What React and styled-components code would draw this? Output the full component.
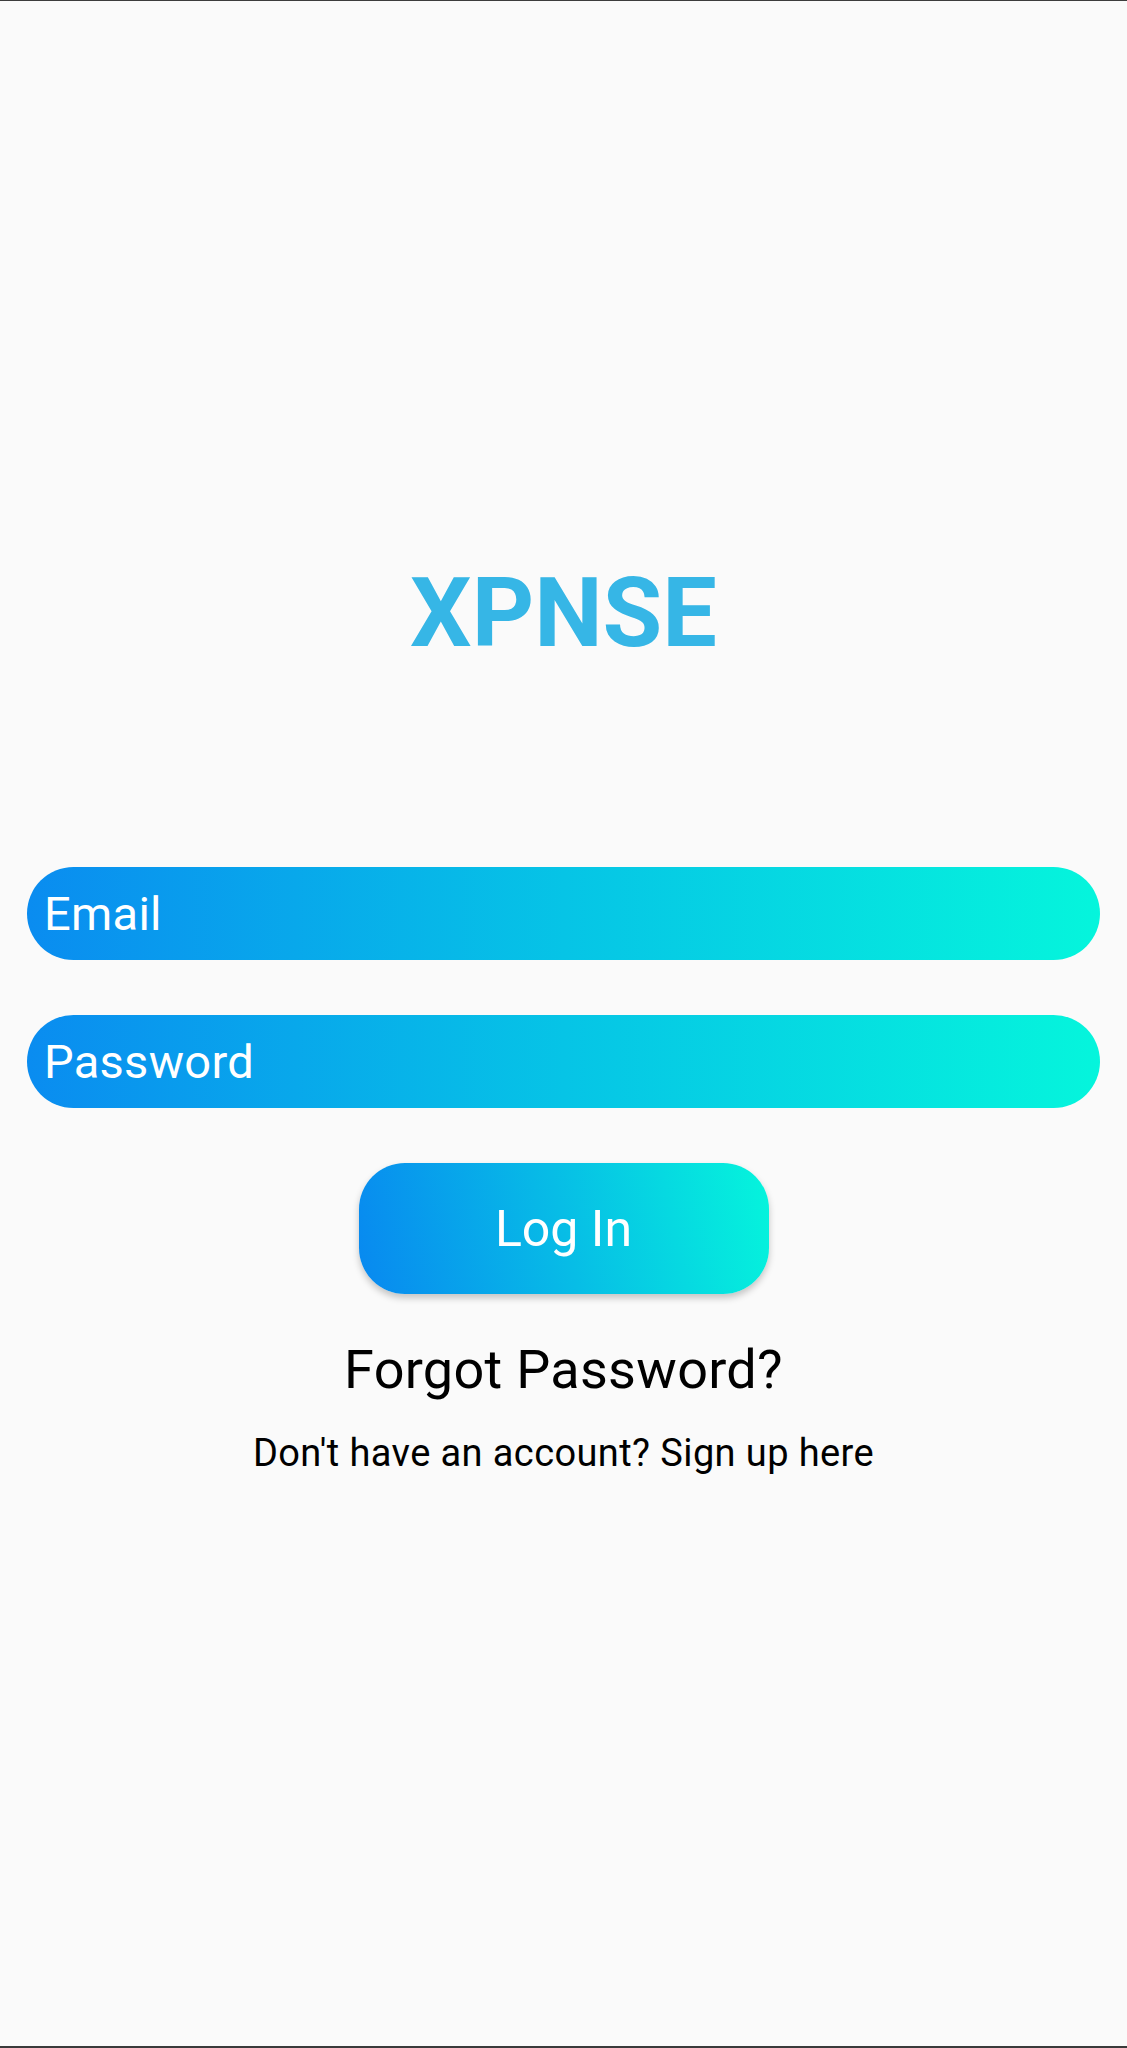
import React from "react";
import styled, { createGlobalStyle } from "styled-components";

const GlobalStyle = createGlobalStyle`
  html, body {
    margin: 0;
    padding: 0;
    background: #fafafa;
  }
  * { box-sizing: border-box; }
`;

const Screen = styled.div`
  min-height: 2048px;
  background: #fafafa;
  border-top: 1px solid #3c3c3c;
  border-bottom: 2px solid #3a3a3a;
  display: flex;
  flex-direction: column;
  align-items: center;
  padding: 564px 27px 0;
  font-family: Roboto, "Open Sans", sans-serif;
`;

const Logo = styled.h1`
  margin: 0;
  font-family: Roboto, "Liberation Sans", sans-serif;
  font-weight: 700;
  font-size: 97px;
  line-height: 1;
  color: #36b6e6;
  letter-spacing: 0;
`;

const Form = styled.form`
  width: 100%;
  margin-top: 205px;
  display: flex;
  flex-direction: column;
  align-items: center;
  gap: 55px;
`;

const Field = styled.input`
  width: 100%;
  height: 93px;
  border: none;
  outline: none;
  border-radius: 47px;
  padding: 0 16px 0 17px;
  background: linear-gradient(to right, #0a8cf0 0%, #06c4e6 50%, #05f5dc 100%);
  color: #ffffff;
  font-family: Roboto, "Open Sans", sans-serif;
  font-size: 47px;
  letter-spacing: 0.3px;
  &::placeholder {
    color: #ffffff;
    opacity: 1;
  }
`;

const LoginButton = styled.button`
  width: 410px;
  height: 131px;
  border: none;
  border-radius: 46px;
  background: linear-gradient(78deg, #0888f0 0%, #07bde6 50%, #05f5dc 100%);
  box-shadow: 0 4px 7px rgba(0, 0, 0, 0.22);
  color: #ffffff;
  font-family: Roboto, "Open Sans", sans-serif;
  font-size: 50px;
  font-weight: 400;
  cursor: pointer;
`;

const Forgot = styled.div`
  margin-top: 49px;
  font-size: 54px;
  letter-spacing: 0.3px;
  line-height: 1;
  color: #000000;
`;

const SignUp = styled.div`
  margin-top: 37px;
  font-size: 38px;
  letter-spacing: 0.4px;
  line-height: 1;
  color: #000000;
`;

export default function App() {
  return (
    <>
      <GlobalStyle />
      <Screen>
        <Logo>XPNSE</Logo>
        <Form onSubmit={(e) => e.preventDefault()}>
          <Field type="email" placeholder="Email" />
          <Field type="password" placeholder="Password" />
          <LoginButton type="submit">Log In</LoginButton>
        </Form>
        <Forgot>Forgot Password?</Forgot>
        <SignUp>Don't have an account? Sign up here</SignUp>
      </Screen>
    </>
  );
}
